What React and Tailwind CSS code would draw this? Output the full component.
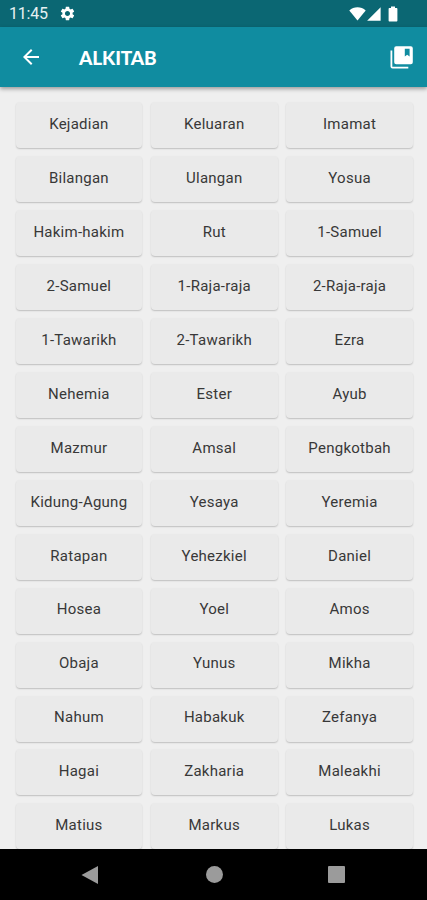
import { MdArrowBack, MdSettings } from 'react-icons/md';

const KITAB = [
  'Kejadian', 'Keluaran', 'Imamat',
  'Bilangan', 'Ulangan', 'Yosua',
  'Hakim-hakim', 'Rut', '1-Samuel',
  '2-Samuel', '1-Raja-raja', '2-Raja-raja',
  '1-Tawarikh', '2-Tawarikh', 'Ezra',
  'Nehemia', 'Ester', 'Ayub',
  'Mazmur', 'Amsal', 'Pengkotbah',
  'Kidung-Agung', 'Yesaya', 'Yeremia',
  'Ratapan', 'Yehezkiel', 'Daniel',
  'Hosea', 'Yoel', 'Amos',
  'Obaja', 'Yunus', 'Mikha',
  'Nahum', 'Habakuk', 'Zefanya',
  'Hagai', 'Zakharia', 'Maleakhi',
  'Matius', 'Markus', 'Lukas',
];

function StatusBar() {
  return (
    <div className="h-[27px] shrink-0 flex items-center bg-[#0b6773] pl-[9px] pr-[29px] text-white">
      <span className="mt-px text-[16px] leading-none tracking-[-0.2px] text-[#e6f1f2]">11:45</span>
      <MdSettings className="ml-[11px] size-[17px]" />
      <div className="ml-auto flex items-center">
        <svg className="w-[17px] h-[14px]" viewBox="0 0 17 14" fill="currentColor">
          <path d="M8.5 13.6 0.3 3.4C2.6 1.3 5.4 0.3 8.5 0.3s5.9 1 8.2 3.1z" />
        </svg>
        <svg className="ml-px w-[14px] h-[14px]" viewBox="0 0 14 14" fill="currentColor">
          <path d="M13.6 0.2v13.5H0.1z" />
        </svg>
        <svg className="ml-[7px] w-[10px] h-[16px]" viewBox="0 0 10 16" fill="currentColor">
          <path d="M3 0.4h4v1.5h1.4c.6 0 1 .4 1 1v11.5c0 .6-.4 1-1 1H1.6c-.6 0-1-.4-1-1V2.9c0-.6.4-1 1-1H3z" />
        </svg>
      </div>
    </div>
  );
}

function IconKoleksi() {
  return (
    <svg className="w-[23px] h-[23px]" viewBox="0 0 23 23" fill="currentColor">
      <path d="M0.5 4.5h1.8v16.2h16v1.8h-15.8a2 2 0 0 1-2-2z" />
      <path
        fillRule="evenodd"
        d="M6.2 0.3h14.6a2 2 0 0 1 2 2v14a2 2 0 0 1-2 2H6.200a2 2 0 0 1-2-2v-14a2 2 0 0 1 2-2zM14.800 2.700v7.800l2.400-1.800 2.400 1.800v-7.800z"
      />
    </svg>
  );
}

function AppBar() {
  return (
    <header className="relative z-10 h-[60px] shrink-0 flex items-center bg-[#108ca0] pl-[19px] pr-[14px] text-white shadow-[0_2px_4px_rgba(0,0,0,0.35)]">
      <button aria-label="Kembali">
        <MdArrowBack className="size-6" />
      </button>
      <h1 className="ml-9 text-[19px] leading-none tracking-[-0.1px] font-black font-['Lato',sans-serif]">ALKITAB</h1>
      <button aria-label="Koleksi" className="ml-auto">
        <IconKoleksi />
      </button>
    </header>
  );
}

function NavBar() {
  return (
    <nav className="h-[51px] shrink-0 flex items-center justify-between bg-black px-[81px] text-[#9b9b9b]">
      <svg className="size-[18px]" viewBox="0 0 18 18" fill="currentColor">
        <path d="M17 0v18L0.5 9z" />
      </svg>
      <span className="ml-px size-[17px] rounded-full bg-[#9b9b9b]" />
      <span className="mr-px size-[17px] rounded-[1px] bg-[#9b9b9b]" />
    </nav>
  );
}

export default function App() {
  return (
    <div className="h-[900px] w-[427px] flex flex-col overflow-hidden bg-[#efefef] font-['Roboto',sans-serif]">
      <StatusBar />
      <AppBar />
      <main className="flex-1 min-h-0 overflow-hidden pt-[15.4px] pl-[15.5px] pr-[14px]">
        <div className="grid grid-cols-3 gap-x-[8.5px] gap-y-[7.93px]">
          {KITAB.map((nama) => (
            <button
              key={nama}
              className="h-[46px] rounded-[4px] bg-[#eaeaea] pb-[2px] text-[15px] tracking-[0.25px] text-[#383838] shadow-[0_1px_1.5px_rgba(0,0,0,0.2)]"
            >
              {nama}
            </button>
          ))}
        </div>
      </main>
      <NavBar />
    </div>
  );
}
